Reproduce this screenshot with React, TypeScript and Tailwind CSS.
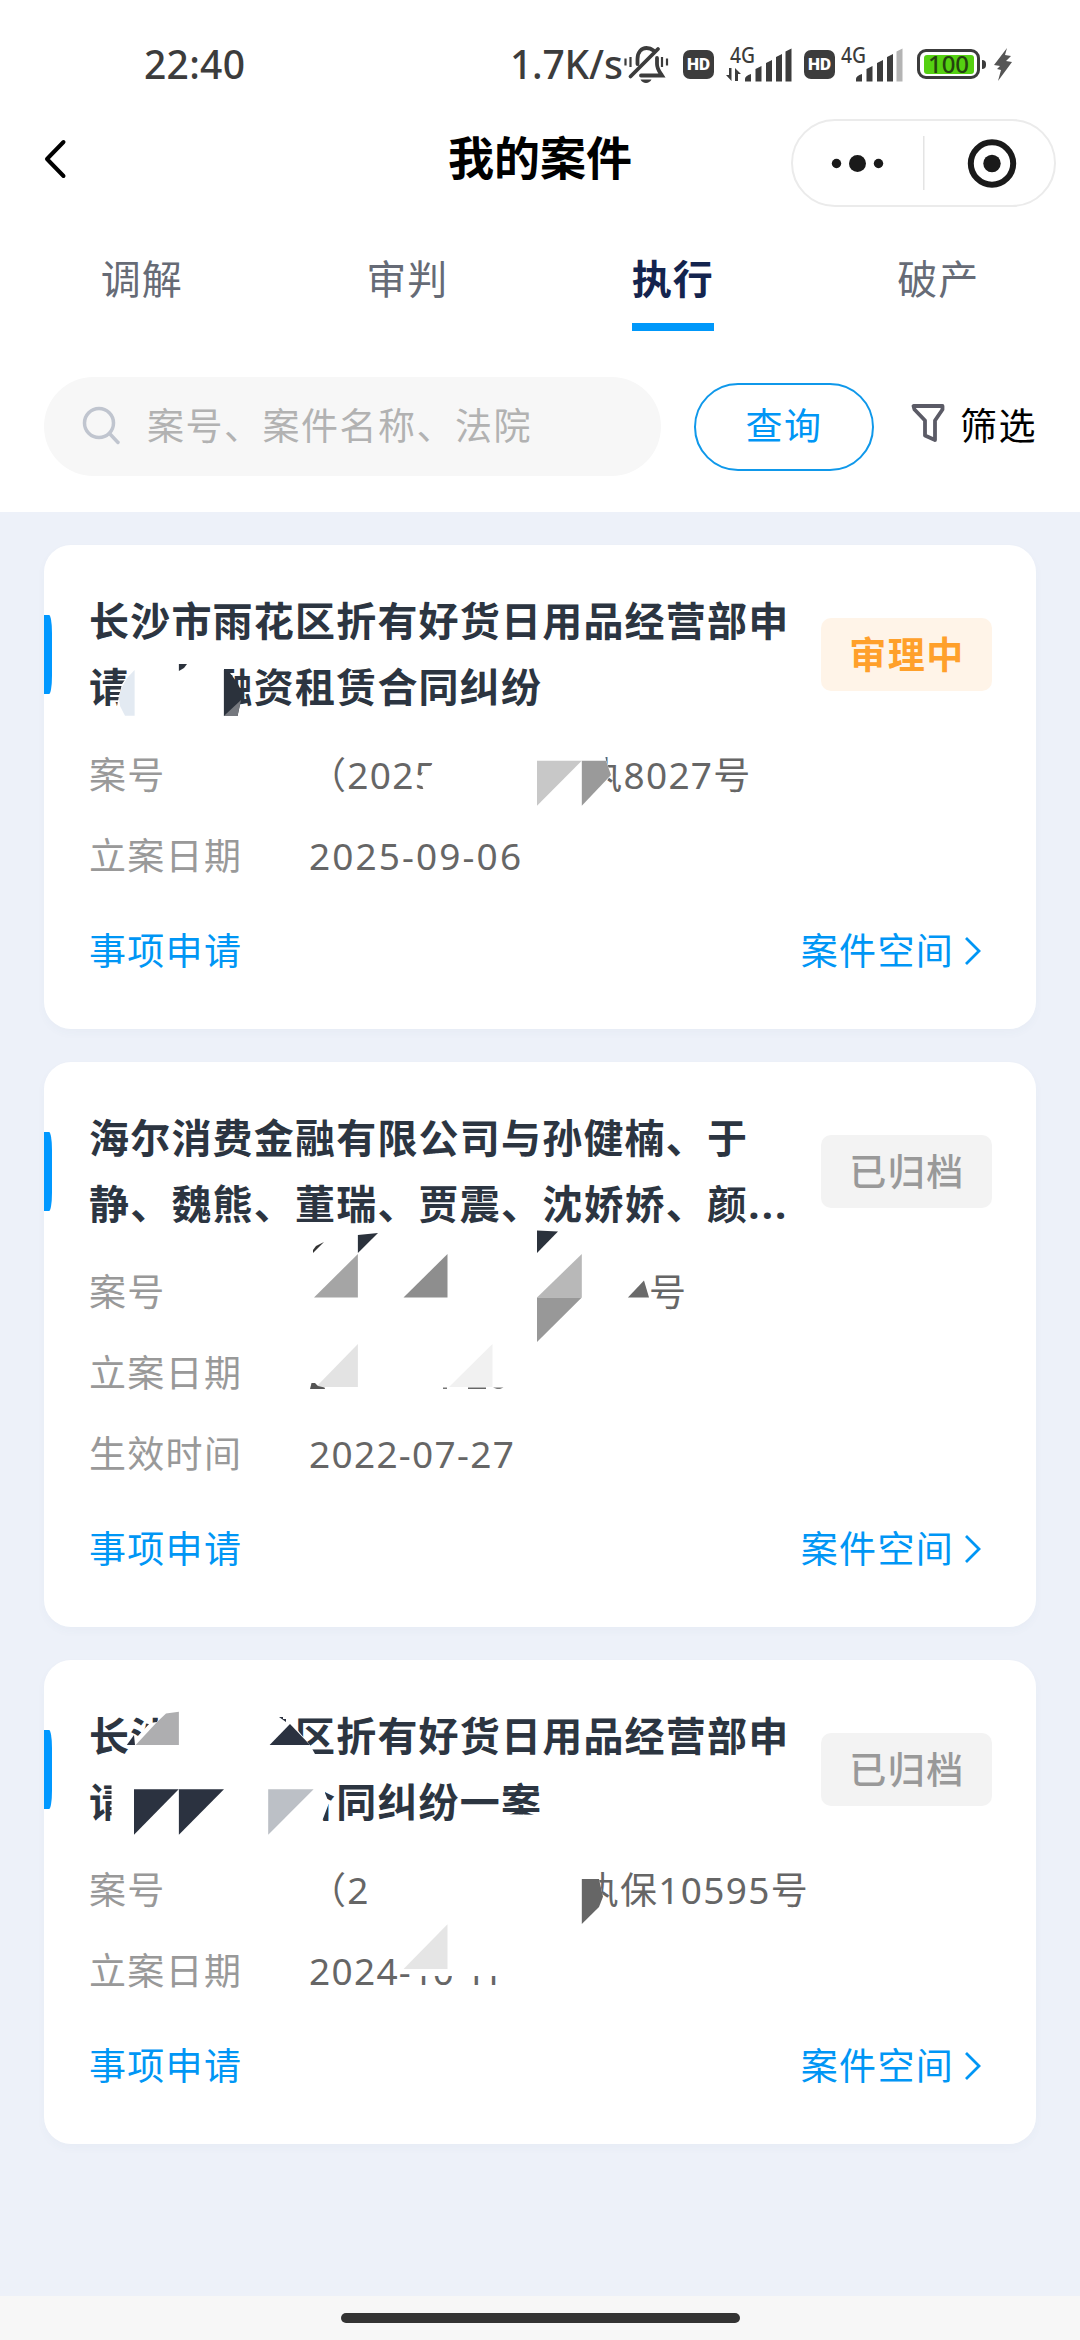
import type { ReactNode } from "react";
import clsx from "clsx";

type Row = { label: string; value: ReactNode };

type Shard = { points: string; fill: string };

type CaseItem = {
  title: ReactNode;
  status: string;
  active?: boolean;
  rows: Row[];
  viewBox: string;
  shards: Shard[];
};

const tabs = ["调解", "审判", "执行", "破产"];

// shards hide the private parts of a case, in page coordinates
const cases: CaseItem[] = [
  {
    title: (
      <>
        长沙市雨花区折有好货日用品经营部申
        <br />请{"\u3000\u3000"}融资租赁合同纠纷
      </>
    ),
    status: "审理中",
    active: true,
    viewBox: "44 545 992 484",
    rows: [
      {
        label: "案号",
        value: (
          <>
            （2025<span className="inline-block w-[148px]" />执8027号
          </>
        ),
      },
      { label: "立案日期", value: <span className="tracking-[2.1px]">2025-09-06</span> },
    ],
    shards: [
      { points: "136,667 129,674 122,684 119,696 117,706 119,720 224,720 224,660 140,660", fill: "#fff" },
      { points: "134.6,670 127,678 121,689 118.9,697 120,706 125,715.7 134.6,715.7", fill: "#e3eaf2" },
      { points: "178.9,664 187,664 184,668 178.9,671", fill: "#2b323c" },
      { points: "223.9,670 230,673 237.5,683 242,692 241,700 237.5,716 223.9,716", fill: "#2b323c" },
      { points: "241,700 223.9,716 237.5,716", fill: "#75787e" },
      { points: "434,763 423,772 419.6,778 425,794 445,794 445,755", fill: "#fff" },
      { points: "581,750 604,750 606,760 611,775 606,782 602,797 581,806", fill: "#fff" },
      { points: "537,760.7 581.8,760.7 537,805.7", fill: "#c8c8c8" },
      { points: "581.8,760.7 606,760.7 611,775 581.8,805.7", fill: "#9a9a9a" },
    ],
  },
  {
    title: (
      <>
        海尔消费金融有限公司与孙健楠、于
        <br />
        静、魏熊、董瑞、贾震、沈娇娇、颜<span className="tracking-[2.2px]">...</span>
      </>
    ),
    status: "已归档",
    viewBox: "44 1062 992 565",
    rows: [
      {
        label: "案号",
        value: (
          <>
            <span className="inline-block w-[340px]" />号
          </>
        ),
      },
      { label: "立案日期", value: "" },
      { label: "生效时间", value: "2022-07-27" },
    ],
    shards: [
      { points: "313,1250 316,1246 324,1242 313,1253", fill: "#333" },
      { points: "357.9,1235 378,1233 357.9,1253", fill: "#2b323c" },
      { points: "537,1230.5 558,1231.5 537,1253", fill: "#2b323c" },
      { points: "357.9,1254 357.9,1297.5 314,1297.5", fill: "#a5a5a5" },
      { points: "447.5,1254 447.5,1297.5 403.5,1297.5", fill: "#8e8e8e" },
      { points: "581.8,1254 581.8,1297.5 537,1297.5", fill: "#b8b8b8" },
      { points: "537,1297.5 581.8,1297.5 537,1342", fill: "#989898" },
      { points: "627.9,1297.5 644,1280.5 649,1297.5", fill: "#6a6a6a" },
      { points: "357.9,1344 357.9,1387 316,1387", fill: "#e3e3e3" },
      { points: "310,1389 311.5,1383 315,1383 318,1386 324.5,1387.5 325,1389", fill: "#555" },
      { points: "492.5,1344 492.5,1387 449,1387", fill: "#f1f1f1" },
      { points: "443,1387.5 447,1387.5 447,1389 443,1389", fill: "#777" },
      { points: "468,1387.5 486,1387.5 486,1389 468,1389", fill: "#666" },
      { points: "493,1387.5 503.5,1387.5 500,1389 497,1389", fill: "#777" },
    ],
  },
  {
    title: (
      <>
        长沙{"\u3000\u3000\u3000"}区折有好货日用品经营部申
        <br />请{"\u3000\u3000\u3000\u3000"}合同纠纷一案
      </>
    ),
    status: "已归档",
    viewBox: "44 1660 992 484",
    rows: [
      {
        label: "案号",
        value: (
          <>
            （2<span className="inline-block w-[212px]" />执保10595号
          </>
        ),
      },
      {
        label: "立案日期",
        value: (
          <>
            2024-<span className="tracking-[-0.5px]">10-</span>
            <span className="tracking-[-4px]">11</span>
          </>
        ),
      },
    ],
    shards: [
      { points: "137,1737 150,1723 157,1722 163,1711 178,1711 178,1762 131,1762 128,1745", fill: "#fff" },
      { points: "126.8,1745 134,1735 135,1745", fill: "#2b3240" },
      { points: "135.7,1745 157,1722 166,1713.5 178.9,1711.7 178.9,1745", fill: "#aeaeb0" },
      { points: "296,1728 300,1733 310,1745 315,1754 312,1760 296,1760", fill: "#fff" },
      { points: "279,1717 283,1717 283,1719 286,1719 286,1722", fill: "#2b3240" },
      { points: "269.6,1745 290,1724 310,1745", fill: "#2b3240" },
      { points: "111.5,1775 133,1775 133,1830 117,1830 111.5,1815", fill: "#fff" },
      { points: "134,1789.3 178.7,1789.3 134,1834.7", fill: "#2b3240" },
      { points: "178.9,1789.3 224,1789.3 178.9,1834.7", fill: "#2b3240" },
      { points: "295,1775 328,1775 325,1793 329,1803 321,1824 295,1828", fill: "#fff" },
      { points: "268.2,1789.3 313.6,1789.3 268.2,1834.7", fill: "#bcc0c6" },
      { points: "500,1814 545,1815 545,1828 500,1828", fill: "#fff" },
      { points: "581,1870 597,1870 599,1879 603,1896.7 599,1915 581,1924", fill: "#fff" },
      { points: "581.8,1879 599,1879 603,1896.7 599,1907 581.8,1924", fill: "#666" },
      { points: "411,1938 500,1938 500,1976 466,1976 466,1990 452,1990 452,1976 411,1976", fill: "#fff" },
      { points: "447.5,1924.3 447.5,1969 403.6,1969", fill: "#e5e5e5" },
    ],
  },
];

function Signal({ weak }: { weak?: boolean }) {
  return (
    <svg className="-mt-3" width="66" height="48" viewBox="0 -12 66 48" fill="#3c3c3c">
      <text x="4" y="17" fontSize="21" textLength="25" lengthAdjust="spacingAndGlyphs">4G</text>
      {!weak && <path d="M5.500 22v13L0 29h3V22zM9 22l6 6h-3v7H9z" />}
      <path d="M19 33q0-3 6-5v7.500h-6zM29.500 23l6-3v15.500h-6zM40 17l6-3v21.500h-6zM50 11l6-3v27.500h-6z" />
      <path d="M59.500 5.500l6-3v33h-6z" fill={weak ? "#b4b4b4" : "#3c3c3c"} />
    </svg>
  );
}

function HdBadge() {
  return (
    <div className="flex h-[29px] w-[31px] items-center justify-center rounded-[7px] bg-[#3c3c3c] font-['Roboto'] text-[17px] leading-none font-black text-white">
      HD
    </div>
  );
}

function StatusBar() {
  return (
    <header className="flex h-[119px] items-start pt-[46px] pl-[144px] text-[39px] leading-[37px] font-medium text-[#3c3c3c]">
      <span className="-mt-px w-[366px] tracking-[0.3px]">22:40</span>
      <span className="-mt-px w-[114px] tracking-[-0.2px] whitespace-nowrap">1.7K/s</span>
      <svg className="mr-[14px]" width="45" height="38" viewBox="0 0 45 38" fill="none" stroke="#3c3c3c" strokeWidth="3.800" strokeLinecap="round">
        <path d="M13.500 18v-5c0-7 4-11 9-11 3 0 5 .8 7 2.500M34 3L6.500 30.500M33 12v6c0 5 2 7 5 11.500H17" />
        <path d="M1.500 12.500v7M6.500 11v10M38 11v10M43 12.500v7" strokeWidth="2.200" strokeLinecap="butt" />
        <path d="M16.500 33.500h11c-2 4.500-9 4.500-11 0z" fill="#3c3c3c" stroke="none" />
      </svg>
      <div className="pt-1">
        <HdBadge />
      </div>
      <div className="ml-3">
        <Signal />
      </div>
      <div className="ml-3 pt-1">
        <HdBadge />
      </div>
      <div className="ml-[2px]">
        <Signal weak />
      </div>
      <div className="mt-[3px] ml-[14px] flex h-[30px] w-[63px] items-center justify-center rounded-[9px] border-[3.5px] border-[#3c3c3c]">
        <div className="flex h-[19px] w-[50px] items-center justify-center rounded-[3px] bg-[#55d011] text-[24px] leading-none text-[#24430f]">
          100
        </div>
      </div>
      <div className="mt-[14px] ml-[2px] h-[9px] w-1 rounded-r-md bg-[#3c3c3c]" />
      <svg className="mt-[2px] ml-2" width="18" height="33" viewBox="0 0 18 33" fill="#555">
        <path d="M13 0L0 17l6 1-3 3 4 1-3 11L18 14l-6-1 5-5-6-1z" />
      </svg>
    </header>
  );
}

function NavBar() {
  return (
    <div className="flex h-[88px] items-center justify-between pr-6 pl-[43px]">
      <svg className="-mt-2 mr-[222px]" width="24" height="40" viewBox="0 0 24 40" fill="none" stroke="#000" strokeWidth="4" strokeLinecap="round" strokeLinejoin="round">
        <path d="M20.500 3L4 20l16.500 17" />
      </svg>
      <h1 className="-mt-3 text-[46px] leading-[60px] font-bold text-black">我的案件</h1>
      <div className="flex h-[88px] w-[265px] items-center rounded-full border-2 border-[#ebebeb]">
        <svg width="261" height="84" viewBox="0 0 261 84" fill="#1a1a1a">
          <circle cx="43.500" cy="42.500" r="4.700" />
          <circle cx="64.500" cy="42.500" r="8.500" />
          <circle cx="85.500" cy="42.500" r="4.700" />
          <path d="M130 15h1.500v54h-1.500z" fill="#e4e4e4" />
          <circle cx="199" cy="42.500" r="21.200" fill="none" stroke="#1a1a1a" strokeWidth="6" />
          <circle cx="199" cy="42.500" r="8.700" />
        </svg>
      </div>
    </div>
  );
}

function CaseCard({ item }: { item: CaseItem }) {
  return (
    <section className="relative rounded-[27px] bg-white px-[45px] pt-[42px] pb-[38px] shadow-[0_4px_10px_rgba(60,90,120,0.03)]">
      <div className="absolute top-[70px] left-0 h-[79px] w-2 rounded-r-[3px_18px] bg-[#0098ff]" />
      <div className="flex h-[134px] items-center justify-between">
        <h2 className="text-[40px] leading-[66px] font-bold tracking-[1.2px] whitespace-nowrap text-[#2c3541]">{item.title}</h2>
        <span
          className={clsx(
            "-mr-px mt-px flex h-[73px] w-[171px] shrink-0 items-center justify-center rounded-[10px] pl-px text-[37px] tracking-[1.5px]",
            item.active ? "bg-[#fff4e8] font-bold text-[#ffa02b]" : "bg-[#f3f3f3] font-medium text-[#999]"
          )}
        >
          {item.status}
        </span>
      </div>
      <div className="mt-[13px]">
        {item.rows.map((row) => (
          <div key={row.label} className="flex h-[81px] items-center text-[37px] leading-[54px] tracking-[1.3px]">
            <span className="w-[220px] text-[#999]">{row.label}</span>
            <span className="whitespace-nowrap text-[#666]">{row.value}</span>
          </div>
        ))}
      </div>
      <div className="mt-[15px] flex h-[80px] items-center justify-between text-[37px] tracking-[1.3px] text-[#0096f5]">
        <span>事项申请</span>
        <span className="flex items-center gap-[10px] pr-[9px]">
          案件空间
          <svg width="18" height="30" viewBox="0 0 18 30" fill="none" stroke="#0096f5" strokeWidth="2.800">
            <path d="M2 2l13 13L2 28" />
          </svg>
        </span>
      </div>
      <svg className="absolute inset-0 size-full" viewBox={item.viewBox}>
        {item.shards.map((s) => (
          <polygon key={s.points} points={s.points} fill={s.fill} />
        ))}
      </svg>
    </section>
  );
}

export default function App() {
  return (
    <div className="flex h-[2340px] w-[1080px] flex-col overflow-hidden bg-[#edf1f9] font-['Noto_Sans','Noto_Sans_CJK_SC',sans-serif]">
      <div className="h-[512px] bg-white">
        <StatusBar />
        <NavBar />
        <nav className="flex h-[124px] px-[9px] pt-[43px]">
          {tabs.map((tab) => (
            <div key={tab} className="flex flex-1 flex-col items-center">
              <span
                className={clsx(
                  "text-[40px] leading-[58px] tracking-[1px]",
                  tab === "执行" ? "font-bold text-[#14244e]" : "text-[#666b76]"
                )}
              >
                {tab}
              </span>
              {tab === "执行" && <div className="mt-[15px] h-2 w-[82px] shrink-0 bg-[#0098fa]" />}
            </div>
          ))}
        </nav>
        <div className="mt-[46px] flex h-[99px] items-center pl-11 text-[37px] tracking-[1.5px]">
          <div className="flex h-[99px] w-[617px] items-center rounded-full bg-[#f7f7f7] pb-[2px] pl-[38px] text-[#b2b2b2]">
            <svg className="mr-[26px]" width="39" height="40" viewBox="0 0 39 40" fill="none" stroke="#c0c5cf" strokeWidth="3.500" strokeLinecap="round">
              <circle cx="17" cy="17" r="14.500" />
              <path d="M27.500 27.500L36 36.500" />
            </svg>
            案号、案件名称、法院
          </div>
          <button className="ml-[33px] h-[88px] w-[180px] rounded-full border-2 border-[#0f98ea] pb-[2px] tracking-[1.5px] text-[#0096f5]">查询</button>
          <svg className="-mt-2 ml-[37px]" width="34" height="40" viewBox="0 0 34 40" fill="none" stroke="#5b5b66" strokeWidth="3.800" strokeLinejoin="round">
            <path d="M2.500 3h29v3.500l-7.500 11V37l-10-4.500V17.500l-10.500-11z" />
          </svg>
          <span className="-mt-[2px] ml-[15px] text-black">筛选</span>
        </div>
      </div>
      <main className="flex flex-1 flex-col gap-[33px] px-11 pt-[33px]">
        {cases.map((item) => (
          <CaseCard key={item.viewBox} item={item} />
        ))}
      </main>
      <footer className="flex h-[44px] items-start justify-center bg-[#f7f7f7] pt-[17px]">
        <div className="h-[10px] w-[399px] rounded-full bg-[#333]" />
      </footer>
    </div>
  );
}
